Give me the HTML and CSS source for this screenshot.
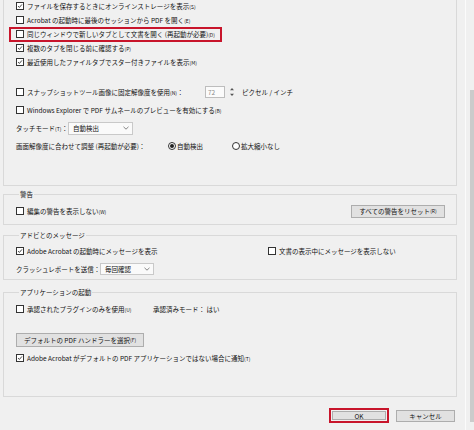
FILE: index.html
```html
<!DOCTYPE html>
<html lang="ja">
<head>
<meta charset="utf-8">
<link rel="stylesheet" href="styles.css">
</head>
<body>
<div class="frame">
  <div class="main">
    <div class="panel">
      <div class="rows14">
        <div class="row"><span class="cb on"><svg viewBox="0 0 8 8"><path d="M1.4 4.1 L3.2 5.9 L6.6 1.9"/></svg></span><span class="t">ファイルを保存するときにオンラインストレージを表示<span class="ak">(S)</span></span></div>
        <div class="row"><span class="cb"></span><span class="t">Acrobat の起動時に最後のセッションから PDF を開く<span class="ak">(E)</span></span></div>
        <div class="row"><span class="hl"><span class="cb"></span><span class="t">同じウィンドウで新しいタブとして文書を開く (再起動が必要)<span class="ak">(D)</span></span></span></div>
        <div class="row"><span class="cb on"><svg viewBox="0 0 8 8"><path d="M1.4 4.1 L3.2 5.9 L6.6 1.9"/></svg></span><span class="t">複数のタブを閉じる前に確認する<span class="ak">(P)</span></span></div>
        <div class="row"><span class="cb on"><svg viewBox="0 0 8 8"><path d="M1.4 4.1 L3.2 5.9 L6.6 1.9"/></svg></span><span class="t">最近使用したファイルタブでスター付きファイルを表示<span class="ak">(M)</span></span></div>
      </div>
      <div class="rows18">
        <div class="row">
          <span class="snap"><span class="cb"></span><span class="t">スナップショットツール画像に固定解像度を使用<span class="ak">(N)</span>：</span></span>
          <span class="num">72</span>
          <span class="spin"><svg viewBox="0 0 4 10"><path d="M0 3.2 L2 1 L4 3.2 Z M0 6.8 L2 9 L4 6.8 Z"/></svg></span>
          <span class="t unit">ピクセル / インチ</span>
        </div>
        <div class="row"><span class="cb"></span><span class="t">Windows Explorer で PDF サムネールのプレビューを有効にする<span class="ak">(B)</span></span></div>
        <div class="row">
          <span class="t lbl-touch">タッチモード<span class="ak">(T)</span>：</span>
          <span class="sel sel-touch"><span class="t">自動検出</span><svg viewBox="0 0 6 4"><path d="M0.5 0.8 L3 3.2 L5.5 0.8"/></svg></span>
        </div>
        <div class="row">
          <span class="t lbl-scale">画面解像度に合わせて調整 (再起動が必要)：</span>
          <span class="rb on"></span><span class="t opt1">自動検出</span>
          <span class="rb"></span><span class="t">拡大縮小なし</span>
        </div>
      </div>
    </div>

    <fieldset class="group g-warn">
      <legend>警告</legend>
      <div class="row">
        <span class="cb"></span><span class="t">編集の警告を表示しない<span class="ak">(W)</span></span>
        <span class="btn btn-reset">すべての警告をリセット<span class="ak">(R)</span></span>
      </div>
    </fieldset>

    <fieldset class="group g-msg">
      <legend>アドビとのメッセージ</legend>
      <div class="row r18">
        <span class="half"><span class="cb on"><svg viewBox="0 0 8 8"><path d="M1.4 4.1 L3.2 5.9 L6.6 1.9"/></svg></span><span class="t">Adobe Acrobat の起動時にメッセージを表示</span></span>
        <span class="cb"></span><span class="t">文書の表示中にメッセージを表示しない</span>
      </div>
      <div class="row r18">
        <span class="t lbl-crash">クラッシュレポートを送信：</span>
        <span class="sel sel-crash"><span class="t">毎回確認</span><svg viewBox="0 0 6 4"><path d="M0.5 0.8 L3 3.2 L5.5 0.8"/></svg></span>
      </div>
    </fieldset>

    <fieldset class="group g-app">
      <legend>アプリケーションの起動</legend>
      <div class="row">
        <span class="plug"><span class="cb"></span><span class="t">承認されたプラグインのみを使用<span class="ak">(U)</span></span></span>
        <span class="t">承認済みモード：&nbsp;はい</span>
      </div>
      <div class="row r-btn">
        <span class="btn btn-handler">デフォルトの PDF ハンドラーを選択<span class="ak">(F)</span></span>
      </div>
      <div class="row r-last">
        <span class="cb on"><svg viewBox="0 0 8 8"><path d="M1.4 4.1 L3.2 5.9 L6.6 1.9"/></svg></span><span class="t">Adobe Acrobat がデフォルトの PDF アプリケーションではない場合に通知<span class="ak">(T)</span></span>
      </div>
    </fieldset>

    <div class="footer">
      <span class="okwrap"><span class="btn btn-ok">OK</span></span>
      <span class="btn btn-cancel">キャンセル</span>
    </div>
  </div>
  <div class="edge">
    <div class="strip"></div>
  </div>
</div>
</body>
</html>
```

FILE: styles.css
```css
html, body {
  margin: 0;
  padding: 0;
  background: #f0f0f0;
}
body {
  width: 474px;
  height: 430px;
  overflow: hidden;
  font-family: "Noto Sans CJK JP", "Noto Sans", sans-serif;
  font-size: 6.5px;
  color: #111;
}
.frame {
  display: flex;
  height: 430px;
}
.main {
  width: 455px;
  padding-left: 3px;
  display: flex;
  flex-direction: column;
}
.edge {
  margin-left: 8px;
  width: 8px;
  border-left: 1px solid #fbfbfb;
  display: flex;
  justify-content: flex-end;
}
.strip {
  width: 4px;
  margin-top: 90px;
  height: 332px;
  background: #cbcbcb;
}

.panel {
  box-sizing: border-box;
  margin-top: -1px;
  height: 187px;
  border: 1px solid #d9d9d9;
  border-top: none;
  padding-left: 12px;
}
.rows14 .row { height: 14px; }
.rows18 { margin-top: 14px; }
.rows18 .row { height: 18px; }

.row {
  display: flex;
  align-items: center;
  white-space: nowrap;
}
.t { line-height: 8px; }
.ak { font-size: 5px; }

.cb {
  box-sizing: border-box;
  width: 8px;
  height: 8px;
  border: 1px solid #333;
  background: #fff;
  margin-right: 3px;
  flex: none;
  display: flex;
}
.cb svg { width: 6px; height: 6px; }
.cb path { fill: none; stroke: #1e1e1e; stroke-width: 1.1; }

.hl {
  display: flex;
  align-items: center;
  box-sizing: border-box;
  height: 15px;
  width: 213px;
  margin-left: -7px;
  padding-left: 5px;
  border: 2px solid #c8152b;
}

.snap { display: flex; align-items: center; width: 189px; }
.num {
  box-sizing: border-box;
  width: 20px;
  height: 12px;
  border: 1px solid #bdbdbd;
  background: #fbfbfb;
  color: #8a8a8a;
  padding-left: 2px;
  line-height: 10px;
}
.spin { margin-left: 5px; display: flex; }
.spin svg { width: 4px; height: 10px; }
.spin path { fill: #555; }
.unit { margin-left: 8px; }

.lbl-touch { width: 52px; }
.sel {
  box-sizing: border-box;
  display: flex;
  align-items: center;
  justify-content: space-between;
  height: 13px;
  border: 1px solid #c9c9c9;
  background: #fafafa;
  padding: 0 3px 0 4px;
}
.sel svg { width: 6px; height: 4px; }
.sel path { fill: none; stroke: #777; stroke-width: 0.9; }
.sel-touch { width: 65px; }

.lbl-scale { width: 152px; }
.rb {
  box-sizing: border-box;
  width: 8px;
  height: 8px;
  border: 1px solid #333;
  border-radius: 50%;
  background: #fff;
  margin-right: 1px;
  display: flex;
  align-items: center;
  justify-content: center;
  flex: none;
}
.rb.on::after {
  content: "";
  width: 4px;
  height: 4px;
  border-radius: 50%;
  background: #222;
}
.opt1 { width: 55px; }

.group {
  margin: 0;
  padding: 0 0 0 12px;
  min-inline-size: 0;
  border: 1px solid #d9d9d9;
}
.group legend {
  padding: 0 1px;
  margin-left: 3px;
  line-height: 8px;
}
.g-warn { margin-top: 4px; padding-top: 6px; padding-bottom: 6px; }
.g-warn .row { height: 14px; }
.btn {
  box-sizing: border-box;
  display: flex;
  align-items: center;
  justify-content: center;
  background: #e1e1e1;
  border: 1px solid #adadad;
  line-height: 8px;
  white-space: nowrap;
}
.btn-reset {
  margin-left: auto;
  margin-right: 11px;
  width: 94px;
  height: 13px;
}

.g-msg { margin-top: 6px; padding-top: 3px; padding-bottom: 1px; }
.r18 { height: 18px; }
.half { display: flex; align-items: center; width: 252px; }
.lbl-crash { width: 84px; }
.sel-crash { width: 54px; height: 12px; }

.g-app { margin-top: 8px; padding-top: 6px; padding-bottom: 31px; }
.g-app .row { height: 14px; }
.plug { display: flex; align-items: center; width: 137px; }
.g-app .r-btn { margin-top: 17px; }
.btn-handler { width: 128px; height: 14px; }
.g-app .r-last { margin-top: 4px; }

.footer {
  display: flex;
  justify-content: flex-end;
  align-items: center;
  gap: 7px;
  margin-top: 11px;
  padding-right: 2px;
}
.okwrap {
  box-sizing: border-box;
  width: 60px;
  height: 15px;
  border: 2px solid #c8152b;
  padding: 1px;
  display: flex;
}
.btn-ok { flex: 1; }
.btn-cancel { width: 59px; height: 12px; }
```
